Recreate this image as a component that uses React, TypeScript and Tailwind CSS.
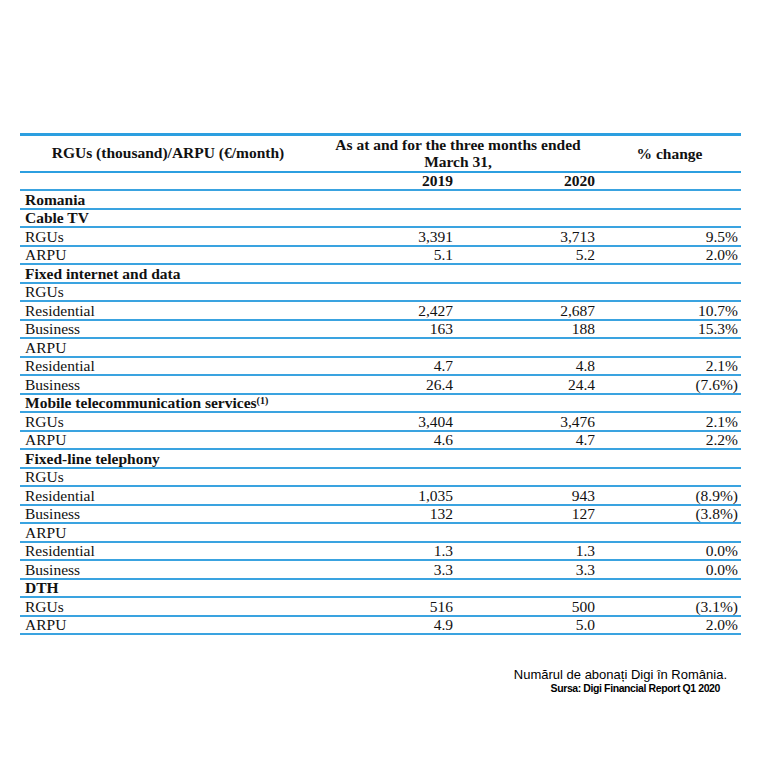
const rows: { label: React.ReactNode; bold?: boolean; a?: string; b?: string; c?: string }[] = [
  { label: "Romania", bold: true },
  { label: "Cable TV", bold: true },
  { label: "RGUs", a: "3,391", b: "3,713", c: "9.5%" },
  { label: "ARPU", a: "5.1", b: "5.2", c: "2.0%" },
  { label: "Fixed internet and data", bold: true },
  { label: "RGUs" },
  { label: "Residential", a: "2,427", b: "2,687", c: "10.7%" },
  { label: "Business", a: "163", b: "188", c: "15.3%" },
  { label: "ARPU" },
  { label: "Residential", a: "4.7", b: "4.8", c: "2.1%" },
  { label: "Business", a: "26.4", b: "24.4", c: "(7.6%)" },
  {
    label: (
      <>
        Mobile telecommunication services<sup className="text-[10px] align-top relative top-[-2px]">(1)</sup>
      </>
    ),
    bold: true,
  },
  { label: "RGUs", a: "3,404", b: "3,476", c: "2.1%" },
  { label: "ARPU", a: "4.6", b: "4.7", c: "2.2%" },
  { label: "Fixed-line telephony", bold: true },
  { label: "RGUs" },
  { label: "Residential", a: "1,035", b: "943", c: "(8.9%)" },
  { label: "Business", a: "132", b: "127", c: "(3.8%)" },
  { label: "ARPU" },
  { label: "Residential", a: "1.3", b: "1.3", c: "0.0%" },
  { label: "Business", a: "3.3", b: "3.3", c: "0.0%" },
  { label: "DTH", bold: true },
  { label: "RGUs", a: "516", b: "500", c: "(3.1%)" },
  { label: "ARPU", a: "4.9", b: "5.0", c: "2.0%" },
];

const cols = "grid grid-cols-[296px_142px_142px_141px]";

export default function App() {
  return (
    <div className="w-[768px] h-[768px] bg-white relative">
      <div className="pt-[133px] pl-[20px]">
        <div
          className="w-[721px] text-[15.5px] text-[#111] leading-none"
          style={{ fontFamily: '"Liberation Serif", "Times New Roman", serif' }}
        >
          {/* header */}
          <div className={`${cols} border-t-[3px] border-b-2 border-[#2c9fe0] h-[40px] font-bold`}>
            <div className="flex items-center justify-center pb-[1px]">RGUs (thousand)/ARPU (€/month)</div>
            <div className="col-span-2 flex flex-col items-center justify-center leading-[17px] pb-[1px]">
              <span>As at and for the three months ended</span>
              <span>March 31,</span>
            </div>
            <div className="flex items-center justify-center pr-[2px]">% change</div>
          </div>
          <div className={`${cols} border-b-2 border-[#3aa3e0] h-[18px] font-bold`}>
            <div />
            <div className="flex items-center justify-end pr-[5px]">2019</div>
            <div className="flex items-center justify-end pr-[5px]">2020</div>
            <div />
          </div>
          {rows.map((r, i) => (
            <div
              key={i}
              className={`${cols} border-b-2 border-[#3aa3e0] h-[18.5px] ${r.bold ? "font-bold" : ""}`}
            >
              <div className="flex items-center pl-[5px] whitespace-nowrap">{r.label}</div>
              <div className="flex items-center justify-end pr-[5px]">{r.a}</div>
              <div className="flex items-center justify-end pr-[5px]">{r.b}</div>
              <div className="flex items-center justify-end pr-[3px]">{r.c}</div>
            </div>
          ))}
        </div>
      </div>
      <div className="mt-[33px] w-[727px] flex flex-col items-end text-black">
        <div className="text-[13px] leading-[14px]" style={{ fontFamily: '"Liberation Sans", Arial, sans-serif' }}>
          Numărul de abonați Digi în România.
        </div>
        <div
          className="text-[10.5px] leading-[13px] font-bold tracking-[-0.4px] mr-[7px]"
          style={{ fontFamily: '"Liberation Sans Narrow", "Liberation Sans", Arial, sans-serif' }}
        >
          Sursa: Digi Financial Report Q1 2020
        </div>
      </div>
    </div>
  );
}
